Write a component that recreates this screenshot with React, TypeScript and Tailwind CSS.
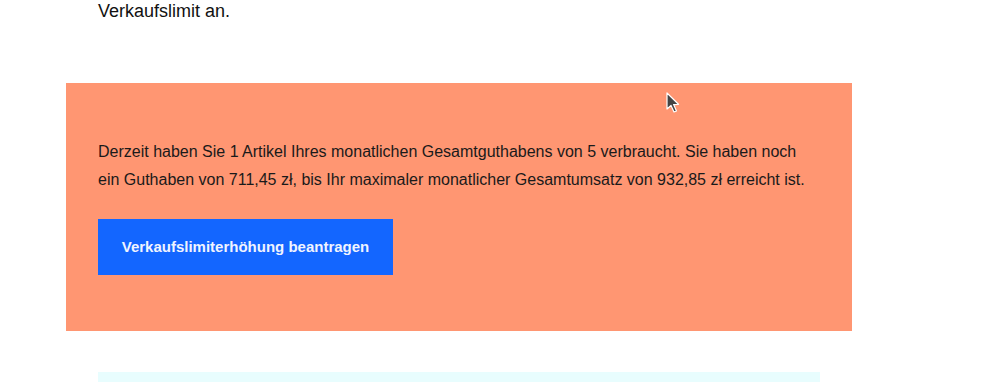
export default function App() {
  return (
    <div className="relative w-[998px] h-[382px] overflow-hidden bg-white font-['Liberation_Sans',Arial,sans-serif]">
      <p className="ml-[98px] mt-[-2px] text-[18px] leading-[27px] text-[#111]">Verkaufslimit an.</p>
      <div className="ml-[66px] mt-[58px] w-[786px] h-[248px] bg-[#ff9672] pl-[32px] pr-[40px] pt-[55px]">
        <p className="text-[16px] leading-[28px] text-[#1a1a1a]">
          Derzeit haben Sie 1 Artikel Ihres monatlichen Gesamtguthabens von 5 verbraucht. Sie haben noch ein Guthaben von 711,45 zł, bis Ihr maximaler monatlicher Gesamtumsatz von 932,85 zł erreicht ist.
        </p>
        <button className="mt-[25px] h-[56px] w-[295px] bg-[#1366ff] text-[15px] font-bold text-[#f0f4ff]">
          Verkaufslimiterhöhung beantragen
        </button>
      </div>
      <div className="ml-[98px] mt-[41px] w-[722px] h-[20px] bg-[#e8fdfe]" />
      <svg className="absolute left-[665px] top-[92px]" width="16" height="22" viewBox="0 0 16 22">
        <path d="M2 1 L2 17 L6 13.5 L9 20 L11.5 19 L8.6 12.6 L13.5 12.3 Z" fill="#444" stroke="#fff" strokeWidth="1.2" strokeLinejoin="round" />
      </svg>
    </div>
  );
}
